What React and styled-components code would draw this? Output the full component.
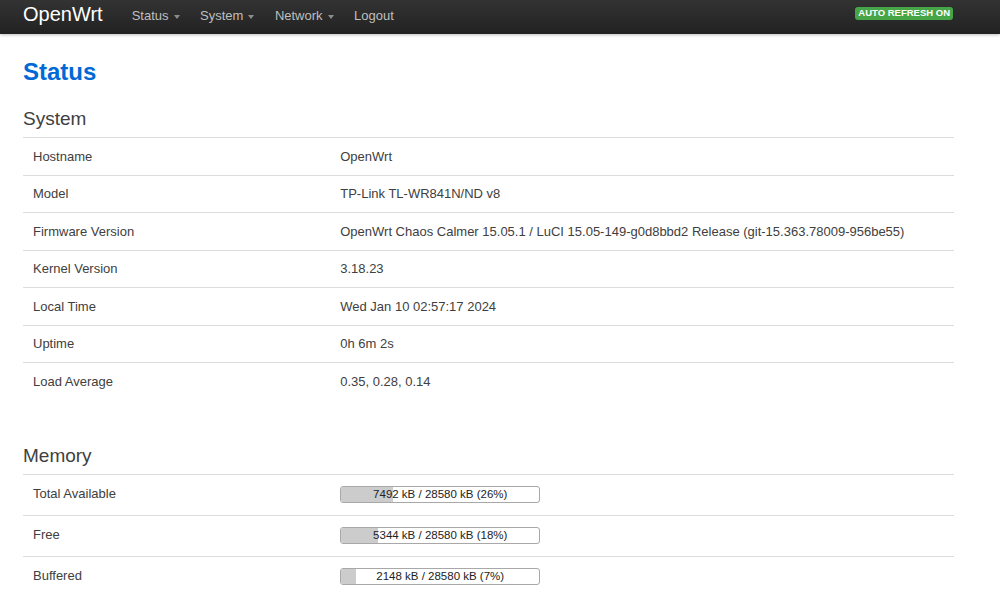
import React from 'react';
import styled, { createGlobalStyle } from 'styled-components';

const GlobalStyle = createGlobalStyle`
  html, body {
    margin: 0;
    padding: 0;
    background: #fff;
    font-family: "Liberation Sans", Arial, sans-serif;
    font-size: 13px;
    color: #404040;
  }
`;

const Topbar = styled.div`
  height: 34px;
  background: linear-gradient(to bottom, #333333, #222222);
  box-shadow: 0 1px 3px rgba(0, 0, 0, 0.25);
`;

const TopbarInner = styled.div`
  display: flex;
  align-items: flex-start;
  width: 931px;
  margin-left: 23px;
  height: 34px;
`;

const Brand = styled.a`
  color: #fff;
  font-size: 20px;
  line-height: 24px;
  padding-top: 2px;
  margin-right: 19px;
  text-decoration: none;
`;

const NavList = styled.ul`
  display: flex;
  list-style: none;
  margin: 0;
  padding: 0;
`;

const NavItem = styled.li`
  display: flex;
  align-items: center;
  padding: 7px ${(p) => (p.$dropdown ? '10.5px' : '10px')} 0 10px;
  line-height: 18px;
  color: #bfbfbf;
  font-size: 13px;
  cursor: pointer;
`;

const Caret = styled.span`
  display: inline-block;
  margin-left: 5px;
  margin-top: 1px;
  width: 0;
  height: 0;
  border-left: 3.5px solid transparent;
  border-right: 3.5px solid transparent;
  border-top: 4px solid #8c8c8c;
`;

const Badge = styled.span`
  margin-left: auto;
  margin-top: 7px;
  margin-right: 1px;
  background: #46a546;
  color: #fff;
  font-weight: bold;
  font-size: 9.5px;
  line-height: 12.5px;
  padding: 0 3px;
  border-radius: 3px;
  text-transform: uppercase;
`;

const Container = styled.div`
  width: 931px;
  margin-left: 23px;
  padding-top: 20px;
`;

const PageTitle = styled.h2`
  margin: 0 0 14.5px;
  font-size: 24px;
  line-height: 36px;
  font-weight: bold;
  color: #0069d6;
`;

const Section = styled.div`
  margin-bottom: 42px;
`;

const SectionTitle = styled.h3`
  margin: 0 0 5.5px;
  font-size: 19px;
  line-height: 27px;
  font-weight: normal;
  color: #404040;
`;

const Table = styled.table`
  width: 100%;
  border-collapse: collapse;
  table-layout: fixed;
`;

const Td = styled.td`
  box-sizing: border-box;
  border-top: 1px solid #ddd;
  padding: ${(p) => (p.$bar ? '10px 10px 12px' : '9.5px 10px 9px')};
  line-height: 18px;
  vertical-align: middle;
  font-size: 13px;
  color: #404040;
  width: ${(p) => (p.$label ? '33%' : 'auto')};
  white-space: nowrap;
`;

const Bar = styled.div`
  position: relative;
  box-sizing: border-box;
  width: 200px;
  height: 17px;
  border: 1px solid #a8a8a8;
  border-radius: 3px;
  background: #fff;
  overflow: hidden;
`;

const BarFill = styled.div`
  position: absolute;
  left: 0;
  top: 0;
  bottom: 0;
  background: #cccccc;
`;

const BarText = styled.div`
  position: relative;
  text-align: center;
  font-size: 11.5px;
  line-height: 15px;
  color: #222;
`;

const system = [
  ['Hostname', 'OpenWrt'],
  ['Model', 'TP-Link TL-WR841N/ND v8'],
  ['Firmware Version', 'OpenWrt Chaos Calmer 15.05.1 / LuCI 15.05-149-g0d8bbd2 Release (git-15.363.78009-956be55)'],
  ['Kernel Version', '3.18.23'],
  ['Local Time', 'Wed Jan 10 02:57:17 2024'],
  ['Uptime', '0h 6m 2s'],
  ['Load Average', '0.35, 0.28, 0.14'],
];

const total = 28580;
const memory = [
  ['Total Available', 7492],
  ['Free', 5344],
  ['Buffered', 2148],
];

function Progress({ value }) {
  const pct = Math.floor((value / total) * 100);
  return (
    <Bar>
      <BarFill style={{ width: `${(value / total) * 100}%` }} />
      <BarText>{`${value} kB / ${total} kB (${pct}%)`}</BarText>
    </Bar>
  );
}

export default function App() {
  return (
    <>
      <GlobalStyle />
      <Topbar>
        <TopbarInner>
          <Brand href="#">OpenWrt</Brand>
          <NavList>
            <NavItem $dropdown>Status<Caret /></NavItem>
            <NavItem $dropdown>System<Caret /></NavItem>
            <NavItem $dropdown>Network<Caret /></NavItem>
            <NavItem>Logout</NavItem>
          </NavList>
          <Badge>Auto Refresh On</Badge>
        </TopbarInner>
      </Topbar>
      <Container>
        <PageTitle>Status</PageTitle>
        <Section>
          <SectionTitle>System</SectionTitle>
          <Table>
            <tbody>
              {system.map(([k, v]) => (
                <tr key={k}>
                  <Td $label>{k}</Td>
                  <Td>{v}</Td>
                </tr>
              ))}
            </tbody>
          </Table>
        </Section>
        <Section>
          <SectionTitle>Memory</SectionTitle>
          <Table>
            <tbody>
              {memory.map(([k, v]) => (
                <tr key={k}>
                  <Td $label $bar>{k}</Td>
                  <Td $bar><Progress value={v} /></Td>
                </tr>
              ))}
            </tbody>
          </Table>
        </Section>
      </Container>
    </>
  );
}
